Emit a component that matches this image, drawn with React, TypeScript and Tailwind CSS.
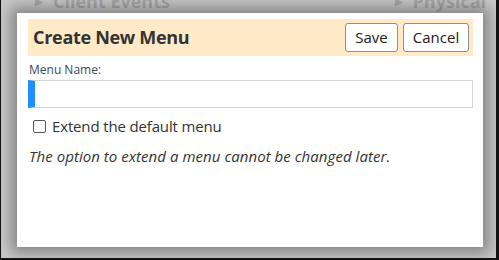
import React from "react";

export default function App() {
  const font = { fontFamily: '"Open Sans", "Noto Sans", Arial, sans-serif' };
  return (
    <div
      className="relative w-[499px] h-[260px] overflow-hidden bg-[#c9c9c9] border-l border-r-[3px] border-b-2 border-[#111]"
      style={font}
    >
      {/* background page */}
      <div className="flex justify-between pl-[34px] pr-[10px] -mt-[12px] text-[18px] font-bold text-[#a9a9a9]">
        <div className="flex items-center gap-[10px]">
          <span className="text-[10px]">▶</span>
          <span>Client Events</span>
        </div>
        <div className="flex items-center gap-[10px]">
          <span className="text-[10px]">▶</span>
          <span>Physical</span>
        </div>
      </div>

      {/* modal */}
      <div className="absolute left-[16px] top-[13px] w-[466px] h-[234px] bg-white shadow-[0_0_14px_6px_rgba(0,0,0,0.35)] pl-[11px] pr-[10px] pt-[6px]">
        <div className="h-[37px] bg-[#ffe9c6] flex items-center justify-between pl-[5px] pr-[4px]">
          <span className="text-[18px] font-bold text-[#333] tracking-[-0.3px]">Create New Menu</span>
          <div className="flex gap-[5px]">
            <button className="h-[29px] w-[53px] bg-white border border-[#8f8f8f] rounded-[3px] text-[15px] text-[#222] leading-none">
              Save
            </button>
            <button className="h-[29px] w-[66px] bg-white border border-[#8f8f8f] rounded-[3px] text-[15px] text-[#222] leading-none">
              Cancel
            </button>
          </div>
        </div>
        <div className="mt-[6px] pl-[1px] text-[12px] leading-[16px] text-[#3b4a5a]">Menu Name:</div>
        <div className="mt-[2px] h-[28px] border border-[#d6d6d6] border-l-[7px] border-l-[#1e8fff]"></div>
        <label className="mt-[8px] ml-[5px] flex items-center gap-[6px] text-[15px] leading-[20px] text-[#333]">
          <span className="w-[13px] h-[13px] border border-[#555] rounded-[2px] bg-white"></span>
          <span className="tracking-[-0.15px]">Extend the default menu</span>
        </label>
        <div className="mt-[10px] pl-[1px] text-[15px] leading-[20px] italic text-[#333] tracking-[0.05px]">
          The option to extend a menu cannot be changed later.
        </div>
      </div>
    </div>
  );
}
